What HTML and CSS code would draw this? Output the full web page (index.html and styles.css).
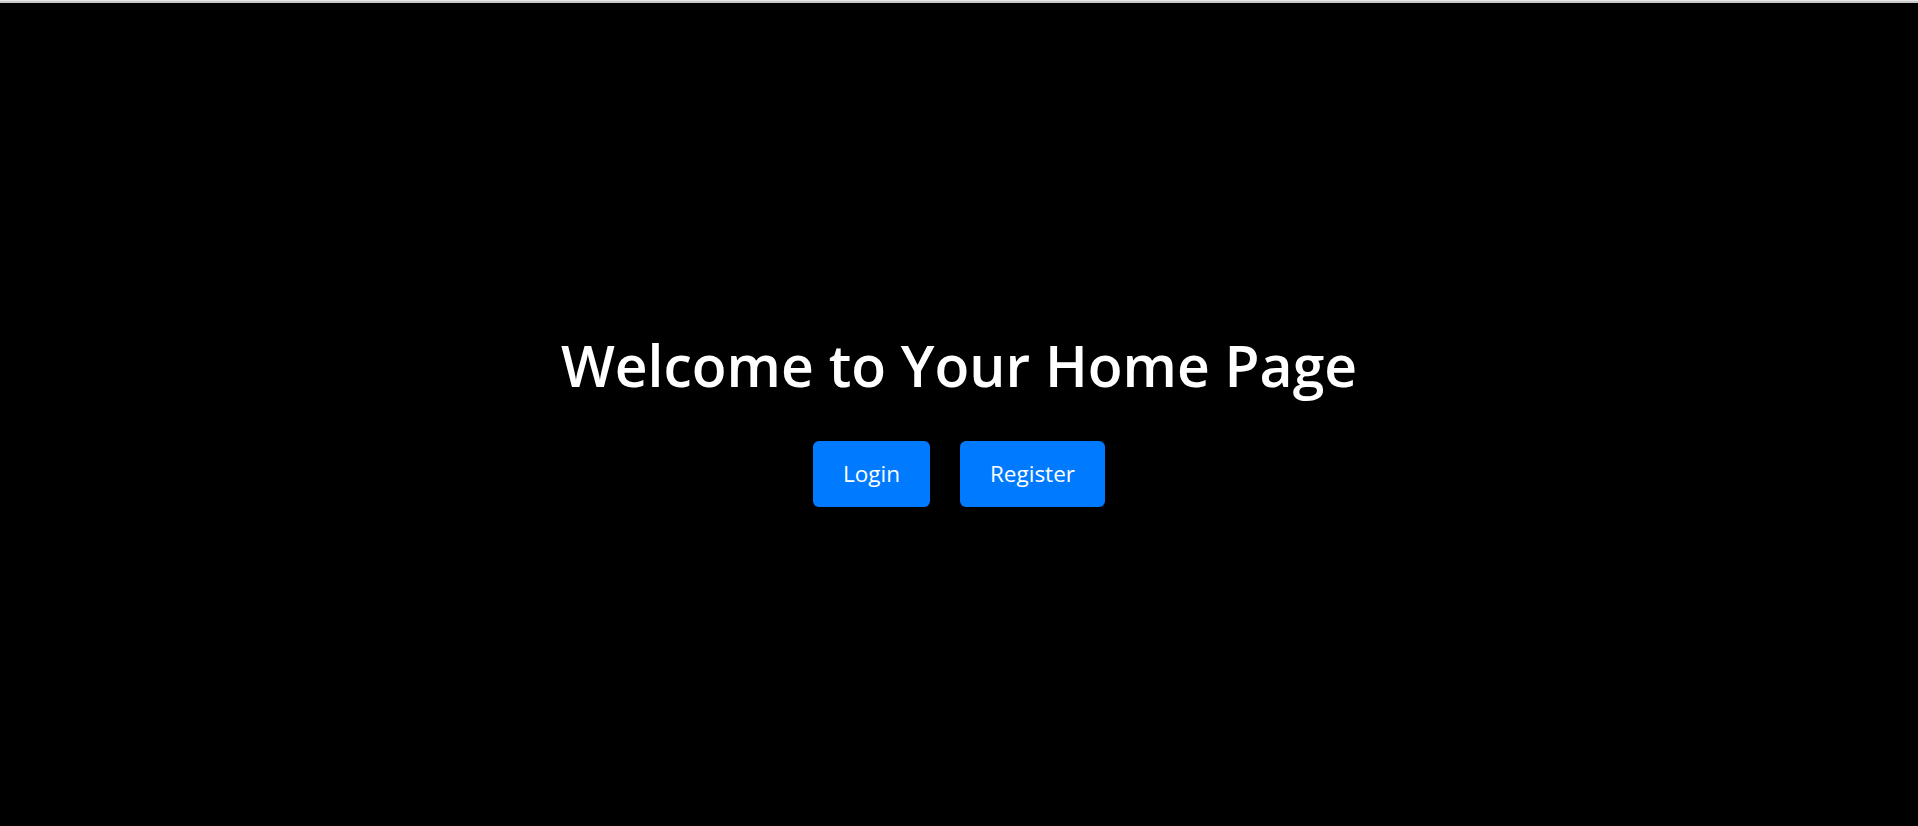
FILE: index.html
```html
<!DOCTYPE html>
<html lang="en">
<head>
<meta charset="utf-8">
<title>Home</title>
<link rel="stylesheet" href="styles.css">
</head>
<body>
<div class="topline"></div>
<main class="hero">
  <h1 class="hero-title">Welcome to Your Home Page</h1>
  <div class="actions">
    <a class="btn" href="#">Login</a>
    <a class="btn" href="#">Register</a>
  </div>
</main>
</body>
</html>
```
FILE: styles.css
```css
html, body {
  margin: 0;
  padding: 0;
  height: 100%;
}
body {
  background: #000;
  display: flex;
  flex-direction: column;
  font-family: "Open Sans", "Noto Sans", sans-serif;
  color: #fff;
}
.topline {
  height: 1px;
  background: #e6e6e6;
  border-bottom: 2px solid #c8c8c8;
  flex: none;
}
.hero {
  flex: 1;
  display: flex;
  flex-direction: column;
  align-items: center;
  justify-content: center;
  padding-top: 9px;
}
.hero-title {
  margin: 0 0 42px;
  font-size: 57px;
  font-weight: 600;
  line-height: 1.2;
}
.actions {
  display: flex;
  gap: 30px;
}
.btn {
  display: block;
  background: #007bff;
  color: #fff;
  text-decoration: none;
  font-size: 22.5px;
  line-height: 36px;
  padding: 15px 30px;
  border-radius: 6px;
}
```
